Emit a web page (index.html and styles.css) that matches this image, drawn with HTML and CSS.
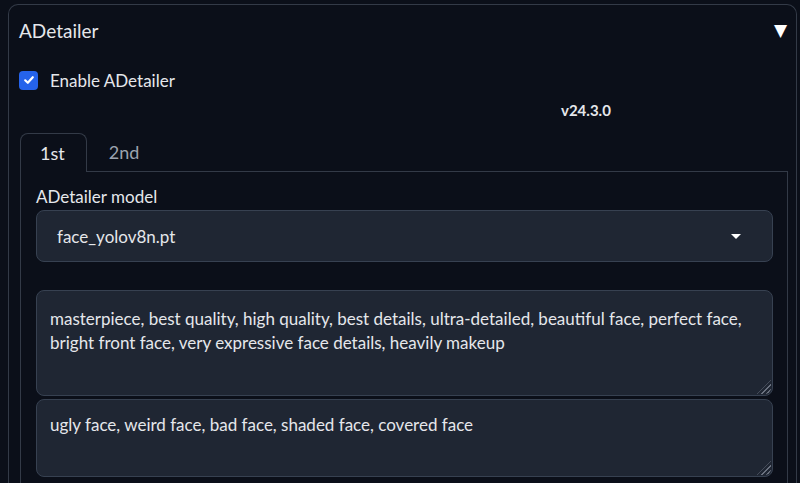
FILE: index.html
```html
<!DOCTYPE html>
<html>
<head>
<meta charset="utf-8">
<link rel="stylesheet" href="styles.css">
</head>
<body>
<div class="panel">
  <div class="header">
    <span class="title">ADetailer</span>
    <span class="caret">▼</span>
  </div>
  <label class="check-row">
    <span class="checkbox"><svg width="12" height="12" viewBox="0 0 12 12"><path d="M2.2 6.3 L4.8 8.8 L9.8 3.2" fill="none" stroke="#fff" stroke-width="2.2" stroke-linecap="round" stroke-linejoin="round"/></svg></span>
    <span class="check-label">Enable ADetailer</span>
  </label>
  <div class="version-row"><span class="version">v24.3.0</span></div>
  <div class="tabs">
    <div class="tabbar">
      <div class="tab active">1st</div>
      <div class="tab">2nd</div>
      <div class="tab-fill"></div>
    </div>
    <div class="tabpanel">
      <div class="field-label">ADetailer model</div>
      <div class="dropdown">
        <span>face_yolov8n.pt</span>
        <span class="dd-arrow"></span>
      </div>
      <div class="textbox tb1">masterpiece, best quality, high quality, best details, ultra-detailed, beautiful face, perfect face, bright front face, very expressive face details, heavily makeup</div>
      <div class="textbox tb2">ugly face, weird face, bad face, shaded face, covered face</div>
    </div>
  </div>
</div>
</body>
</html>
```
FILE: styles.css
```css
html, body {
  margin: 0;
  padding: 0;
  background: #0b0f19;
  height: 100%;
  overflow: hidden;
}
body {
  font-family: "Lato", "Noto Sans", sans-serif;
  color: #e5e7eb;
}
.panel {
  box-sizing: border-box;
  margin: 4px 3px 0 8px;
  border: 1px solid #333a47;
  border-bottom: none;
  border-radius: 10px 10px 0 0;
  padding: 0 8px 0 11px;
  height: 479px;
  overflow: hidden;
  display: flex;
  flex-direction: column;
}
.header {
  display: flex;
  justify-content: space-between;
  align-items: center;
  height: 50px;
  flex: none;
}
.title {
  font-size: 19px;
  margin-left: -1px;
}
.caret {
  font-size: 17px;
  color: #fff;
  margin-right: 1px;
  font-family: "DejaVu Sans", sans-serif;
}
.check-row {
  display: flex;
  align-items: center;
  gap: 12px;
  margin-top: 15px;
  height: 20px;
  flex: none;
}
.checkbox {
  width: 19px;
  height: 19px;
  border-radius: 4px;
  background: #2563eb;
  display: flex;
  align-items: center;
  justify-content: center;
  margin-left: -1px;
}
.check-label {
  font-size: 17px;
}
.version-row {
  display: flex;
  height: 22px;
  margin-top: 9px;
  align-items: center;
  padding-left: 541px;
  flex: none;
}
.version {
  font-size: 15px;
  font-weight: bold;
}
.tabs {
  margin-top: 12px;
  flex: 1;
  display: flex;
  flex-direction: column;
  min-height: 0;
}
.tabbar {
  display: flex;
  height: 39px;
  flex: none;
}
.tab {
  font-size: 18px;
  color: #9ca3af;
  display: flex;
  align-items: center;
  padding: 0 21px 0 22px;
  border-bottom: 1px solid #333a47;
}
.tab.active {
  color: #e5e7eb;
  border: 1px solid #333a47;
  border-bottom: none;
  border-radius: 8px 8px 0 0;
  padding: 0 21px 0 19px;
}
.tab-fill {
  flex: 1;
  border-bottom: 1px solid #333a47;
}
.tabpanel {
  flex: 1;
  min-height: 0;
  overflow: hidden;
  border-left: 1px solid #333a47;
  border-right: 1px solid #333a47;
  padding: 13px 14px 0 15px;
}
.field-label {
  font-size: 17px;
  line-height: 24px;
}
.dropdown {
  margin-top: 1px;
  height: 50px;
  border: 1px solid #374151;
  border-radius: 8px;
  background: #1f2633;
  display: flex;
  align-items: center;
  justify-content: space-between;
  padding: 0 31px 0 20px;
  font-size: 17px;
}
.dd-arrow {
  width: 0;
  height: 0;
  border-left: 5px solid transparent;
  border-right: 5px solid transparent;
  border-top: 5px solid #fff;
}
.textbox {
  position: relative;
  border: 1px solid #374151;
  border-radius: 8px;
  background: #1f2633;
  font-size: 17px;
  line-height: 24px;
  padding: 16px 20px 0 13px;
}
.textbox::after {
  content: "";
  position: absolute;
  right: 1px;
  bottom: 1px;
  width: 14px;
  height: 14px;
  background: repeating-linear-gradient(135deg, transparent 0 2px, #6b7280 2px 3.5px);
  clip-path: polygon(100% 0, 100% 100%, 0 100%);
  border-bottom-right-radius: 6px;
}
.tb1 {
  margin-top: 28px;
  height: 88px;
}
.tb2 {
  margin-top: 3px;
  height: 63px;
  padding-top: 13px;
}
```
